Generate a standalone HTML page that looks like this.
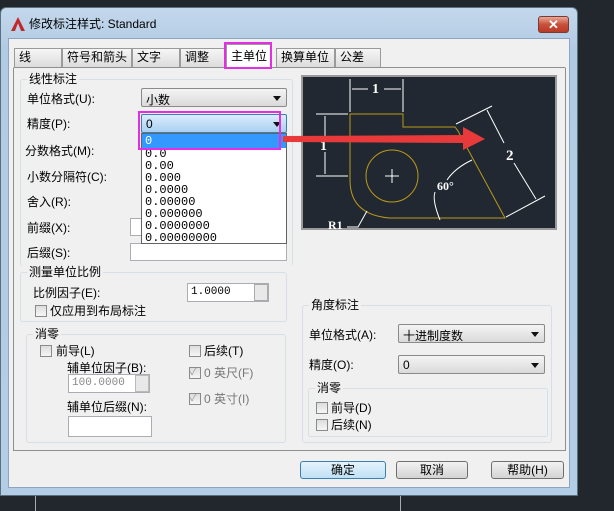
<!DOCTYPE html>
<html><head><meta charset="utf-8"><style>
*{box-sizing:border-box;margin:0;padding:0}
body{width:614px;height:511px;background:#22262d;position:relative;overflow:hidden;font-family:"Liberation Sans","Noto Sans CJK SC",sans-serif;font-size:12px;color:#000}
.a{position:absolute}
.win{left:0;top:7px;width:578px;height:489px;background:linear-gradient(#c4d8ec,#b2cbe4 40px,#b4cde6);border:1px solid #5a7080;border-radius:6px 6px 0 0}
.client{left:8px;top:38px;width:562px;height:450px;background:#f0f0f0;border:1px solid #8ea6bd}
.t{position:absolute;white-space:nowrap;font-size:12px;line-height:14px}
.tab{position:absolute;top:48px;height:19px;border:1px solid #9a9a9a;border-bottom:none;background:linear-gradient(#f6f6f6,#dcdcdc);font-size:12px;line-height:15px;padding:1px 0 0 4px;white-space:nowrap;overflow:hidden}
.grp{position:absolute;border:1px solid #d5dfe5;border-radius:3px}
.gl{position:absolute;background:#f0f0f0;padding:0 2px;font-size:12px;line-height:14px;top:-8px;left:6px}
.combo{position:absolute;height:19px;border:1px solid #8a8a8a;border-radius:2px;background:linear-gradient(#f4f4f4,#dadada);padding:2px 4px;font-size:12px}
.combo:after{content:"";position:absolute;right:5px;top:7px;border:4px solid transparent;border-top:5px solid #111}
.cb{position:absolute;width:12px;height:12px;border:1px solid #8a8a8a;background:linear-gradient(#ddd,#f6f6f6)}
.inp{position:absolute;background:#fff;border:1px solid #abadb3}
.btn{position:absolute;top:461px;height:18px;border:1px solid #707070;border-radius:3px;background:linear-gradient(#f2f2f2,#d4d4d4);text-align:center;font-size:12px;line-height:16px}
.mag{position:absolute;border:2px solid #e22fe6}
.dl div{height:12px;line-height:12px}
</style></head><body>
<div class="a" style="left:35px;top:496px;width:1px;height:15px;background:#aaa"></div>
<div class="a" style="left:400px;top:496px;width:1px;height:15px;background:#aaa"></div>
<div class="a win"></div>
<div class="a" style="left:11px;top:17px;width:14px;height:14px;background:#c0282c;clip-path:polygon(50% 0,100% 100%,72% 100%,50% 45%,28% 100%,0 100%)"></div>
<div class="t" style="left:29px;top:17px;font-size:12px">修改标注样式: Standard</div>
<div class="a" style="left:538px;top:16px;width:31px;height:17px;border:1px solid #7a3a30;border-radius:3px;background:linear-gradient(#e8a898,#c8503a 50%,#b83a25);color:#fff;text-align:center;font-weight:bold;font-size:13px;line-height:15px">✕</div>
<div class="a client"></div>
<div class="tab" style="left:14px;width:48px">线</div>
<div class="tab" style="left:62px;width:70px">符号和箭头</div>
<div class="tab" style="left:132px;width:48px">文字</div>
<div class="tab" style="left:180px;width:46px">调整</div>
<div class="tab" style="left:226px;width:46px;top:44px;height:24px;background:#fff;padding-top:4px">主单位</div>
<div class="tab" style="left:276px;width:59px">换算单位</div>
<div class="tab" style="left:335px;width:46px">公差</div>
<div class="a" style="left:13px;top:67px;width:553px;height:384px;border:1px solid #8e8f8f;border-top-color:#fff;background:#f0f0f0"></div>
<div class="a" style="left:14px;top:67px;width:212px;height:1px;background:#8e8f8f"></div>
<div class="a" style="left:272px;top:67px;width:293px;height:1px;background:#8e8f8f"></div>
<div class="mag" style="left:224px;top:42px;width:48px;height:27px"></div>
<div class="grp" style="left:20px;top:79px;width:273px;height:187px;border-bottom:none"><span class="gl">线性标注</span></div>
<div class="t" style="left:27px;top:92px">单位格式(U):</div>
<div class="combo" style="left:141px;top:88px;width:146px">小数</div>
<div class="t" style="left:27px;top:117px">精度(P):</div>
<div class="t" style="left:25px;top:144px">分数格式(M):</div>
<div class="t" style="left:27px;top:170px">小数分隔符(C):</div>
<div class="t" style="left:27px;top:195px">舍入(R):</div>
<div class="t" style="left:27px;top:221px">前缀(X):</div>
<div class="inp" style="left:130px;top:218px;width:157px;height:18px"></div>
<div class="t" style="left:27px;top:246px">后缀(S):</div>
<div class="inp" style="left:130px;top:243px;width:157px;height:18px"></div>
<div class="combo" style="left:141px;top:114px;width:146px;background:linear-gradient(#dcecfc,#a8d0f2);border-color:#3c7fb1">0</div>
<div class="a dl" style="left:141px;top:133px;width:146px;height:111px;background:#fff;border:1px solid #646464;font-size:12px;font-family:'Liberation Mono',monospace;padding:0 3px">
<div style="background:#3399ff;color:#fff;margin:0 -3px;padding:0 3px;height:14px;line-height:14px">0</div>
<div>0.0</div><div>0.00</div><div>0.000</div><div>0.0000</div><div>0.00000</div><div>0.000000</div><div>0.0000000</div><div>0.00000000</div></div>
<div class="mag" style="left:138px;top:111px;width:143px;height:39px"></div>
<div class="grp" style="left:20px;top:272px;width:267px;height:50px"><span class="gl">测量单位比例</span></div>
<div class="t" style="left:33px;top:286px">比例因子(E):</div>
<div class="inp" style="left:187px;top:283px;width:82px;height:19px;padding:2px 3px;font-family:'Liberation Mono',monospace;font-size:11px">1.0000</div>
<div class="a" style="left:254px;top:284px;width:14px;height:17px;background:#e8e8e8;border:1px solid #aaa"></div>
<div class="cb" style="left:35px;top:305px"></div>
<div class="t" style="left:50px;top:304px">仅应用到布局标注</div>
<div class="grp" style="left:26px;top:334px;width:260px;height:109px"><span class="gl">消零</span></div>
<div class="cb" style="left:40px;top:345px"></div>
<div class="t" style="left:56px;top:344px">前导(L)</div>
<div class="t" style="left:67px;top:361px">辅单位因子(B):</div>
<div class="inp" style="left:68px;top:374px;width:82px;height:19px;padding:2px 3px;color:#888;font-family:'Liberation Mono',monospace;font-size:11px">100.0000</div>
<div class="a" style="left:135px;top:375px;width:14px;height:17px;background:#e8e8e8;border:1px solid #bbb"></div>
<div class="t" style="left:67px;top:400px">辅单位后缀(N):</div>
<div class="inp" style="left:68px;top:416px;width:84px;height:21px"></div>
<div class="cb" style="left:189px;top:345px"></div>
<div class="t" style="left:204px;top:344px">后续(T)</div>
<div class="cb" style="left:189px;top:367px;color:#999;font-size:10px;line-height:10px">✓</div>
<div class="t" style="left:204px;top:366px;color:#777">0 英尺(F)</div>
<div class="cb" style="left:189px;top:393px;color:#999;font-size:10px;line-height:10px">✓</div>
<div class="t" style="left:204px;top:392px;color:#777">0 英寸(I)</div>
<div class="a" style="left:301px;top:75px;width:256px;height:155px;background:#9a9a9a;padding:2px"><div style="width:100%;height:100%;background:#222832"></div></div>
<svg class="a" style="left:301px;top:75px" width="256" height="155" viewBox="301 75 256 155">
<g fill="none" stroke="#b89a1a" stroke-width="1">
<path d="M350 114 H403 V127 H455 L458 131 L505 218 H390 Q350 215 350 180 Z"/>
<circle cx="392" cy="176" r="26"/>
</g>
<g stroke="#fff" stroke-width="1" fill="none">
<path d="M350 79V112M403 79V112M352 89H368M384 89H401"/>
<path d="M316 114H348M316 176H348M325 116V140M325 152V174"/>
<path d="M385 176H399M392 169V183"/>
<path d="M456 124L492 106M506 217L545 196M487 110L504 143M514 163L536 199"/>
<path d="M440 220Q432 200 435 192M447 180Q455 168 472 160"/>
<path d="M347 227H358L367 211"/>
</g>
<g fill="#fff" font-family="Liberation Serif,serif" font-weight="bold">
<text x="372" y="93" font-size="14">1</text>
<text x="320" y="150" font-size="14">1</text>
<text x="506" y="160" font-size="15">2</text>
<text x="437" y="190" font-size="12">60°</text>
<text x="328" y="229" font-size="12">R1</text>
</g>
</svg>
<svg class="a" style="left:0;top:0" width="614" height="511"><polygon points="283,136 463,135 463,127 485,139 463,150 463,143 283,142" fill="#e83a3a"/></svg>
<div class="grp" style="left:302px;top:305px;width:250px;height:138px"><span class="gl">角度标注</span></div>
<div class="t" style="left:309px;top:328px">单位格式(A):</div>
<div class="combo" style="left:398px;top:324px;width:147px">十进制度数</div>
<div class="t" style="left:309px;top:358px">精度(O):</div>
<div class="combo" style="left:398px;top:355px;width:147px">0</div>
<div class="grp" style="left:308px;top:388px;width:240px;height:49px"><span class="gl">消零</span></div>
<div class="cb" style="left:316px;top:402px"></div>
<div class="t" style="left:331px;top:401px">前导(D)</div>
<div class="cb" style="left:316px;top:419px"></div>
<div class="t" style="left:331px;top:418px">后续(N)</div>
<div class="btn" style="left:300px;width:86px;border-color:#3c7fb1;background:linear-gradient(#e5f3fb,#bfe0f5)">确定</div>
<div class="btn" style="left:396px;width:72px">取消</div>
<div class="btn" style="left:491px;width:73px">帮助(H)</div>
</body></html>
